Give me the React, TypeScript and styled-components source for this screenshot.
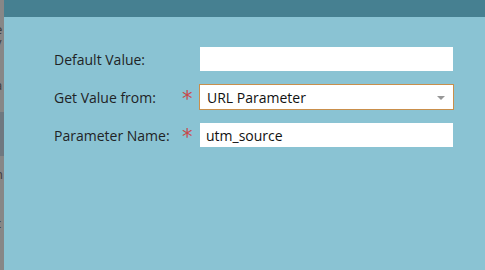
import React from "react";
import styled, { createGlobalStyle } from "styled-components";

const Global = createGlobalStyle`
  html, body { margin: 0; padding: 0; }
  body { width: 485px; height: 270px; overflow: hidden; font-family: "Open Sans", "Noto Sans", sans-serif; }
`;

const Page = styled.div`
  display: flex;
  width: 485px;
  height: 270px;
`;

const Backdrop = styled.div`
  width: 4px;
  flex: none;
  background: #878787;
  overflow: hidden;
  display: flex;
  flex-direction: column;
  color: #3e3e3e;
  font-size: 13px;
  line-height: 13px;
`;

const BackdropGlyph = styled.div<{ $top: number }>`
  margin-top: ${(p) => p.$top}px;
  margin-left: -5px;
  height: 13px;
  color: #3e3e3e;
`;

const BackdropBand = styled.div`
  margin-top: 20px;
  height: 44px;
  background: #6f7880;
  flex: none;
`;

const Dialog = styled.div`
  flex: 1;
  display: flex;
  flex-direction: column;
  background: #8ac3d3;
`;

const Header = styled.div`
  height: 17px;
  background: #468091;
  flex: none;
`;

const Body = styled.div`
  padding: 30px 0 0 50px;
`;

const Form = styled.div`
  display: grid;
  grid-template-columns: 128px 17px 254px;
  grid-template-rows: 24px 26px 24px;
  row-gap: 13px;
  align-items: center;
`;

const Label = styled.div`
  font-size: 14px;
  color: #1f2326;
  white-space: nowrap;
`;

const Star = styled.div`
  color: #c9484a;
  font-size: 21px;
  line-height: 20px;
  height: 14px;
  display: flex;
  align-items: center;
  margin-top: 3px;
  font-family: "DejaVu Sans", sans-serif;
`;

const Input = styled.div`
  height: 24px;
  background: #fff;
  box-sizing: border-box;
  padding-left: 6px;
  margin-left: 1px;
  width: 253px;
  font-size: 14px;
  color: #111;
  display: flex;
  align-items: center;
`;

const Select = styled.div`
  height: 26px;
  box-sizing: border-box;
  border: 1px solid #c98f4c;
  background: #fff;
  width: 255px;
  padding: 0 7px 0 7px;
  display: flex;
  align-items: center;
  justify-content: space-between;
  font-size: 14px;
  color: #111;
`;

const Caret = styled.div`
  width: 0;
  height: 0;
  border-left: 4.5px solid transparent;
  border-right: 4.5px solid transparent;
  border-top: 4.5px solid #979797;
  margin-top: 1px;
  margin-right: 1px;
`;

export default function App() {
  return (
    <>
      <Global />
      <Page>
        <Backdrop>
          <BackdropGlyph $top={23}>e</BackdropGlyph>
          <BackdropGlyph $top={0}>y</BackdropGlyph>
          <BackdropGlyph $top={30}>a</BackdropGlyph>
          <BackdropBand />
          <BackdropGlyph $top={12}>n</BackdropGlyph>
          <BackdropGlyph $top={36}>c</BackdropGlyph>
        </Backdrop>
        <Dialog>
          <Header />
          <Body>
            <Form>
              <Label>Default Value:</Label>
              <span />
              <Input />
              <Label>Get Value from:</Label>
              <Star>*</Star>
              <Select>
                <span>URL Parameter</span>
                <Caret />
              </Select>
              <Label>Parameter Name:</Label>
              <Star>*</Star>
              <Input>utm_source</Input>
            </Form>
          </Body>
        </Dialog>
      </Page>
    </>
  );
}
